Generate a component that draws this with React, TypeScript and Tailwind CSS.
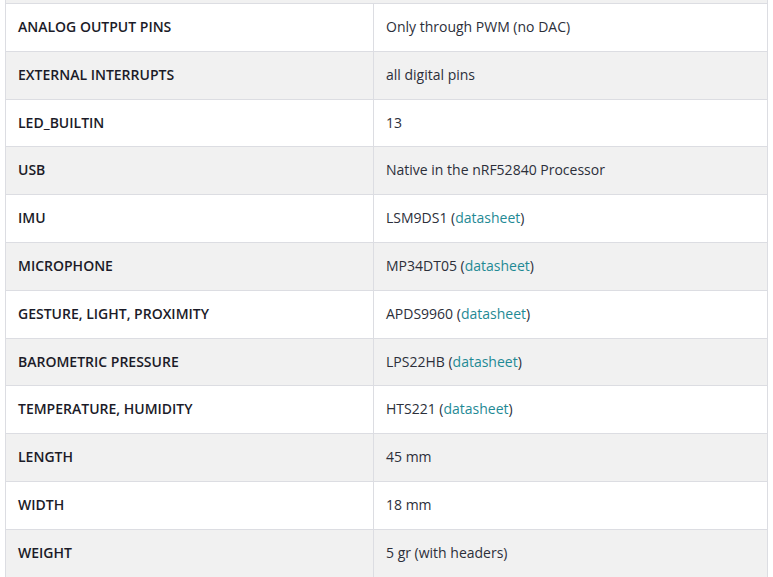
import React from "react";

type Row = { label: string; value: string; link?: boolean };

const rows: Row[] = [
  { label: "ANALOG OUTPUT PINS", value: "Only through PWM (no DAC)" },
  { label: "EXTERNAL INTERRUPTS", value: "all digital pins" },
  { label: "LED_BUILTIN", value: "13" },
  { label: "USB", value: "Native in the nRF52840 Processor" },
  { label: "IMU", value: "LSM9DS1", link: true },
  { label: "MICROPHONE", value: "MP34DT05", link: true },
  { label: "GESTURE, LIGHT, PROXIMITY", value: "APDS9960", link: true },
  { label: "BAROMETRIC PRESSURE", value: "LPS22HB", link: true },
  { label: "TEMPERATURE, HUMIDITY", value: "HTS221", link: true },
  { label: "LENGTH", value: "45 mm" },
  { label: "WIDTH", value: "18 mm" },
  { label: "WEIGHT", value: "5 gr (with headers)" },
];

export default function App() {
  return (
    <div
      className="w-[773px] h-[577px] overflow-hidden bg-white"
      style={{ fontFamily: '"Open Sans", "Liberation Sans", sans-serif' }}
    >
      <div className="ml-[5px] w-[763px]">
        <div className="h-[3px] bg-[#f1f1f1] border-x border-[#dcdde2]" />
        <table className="w-full border-collapse text-[14px] leading-[22.8px]">
          <tbody>
            {rows.map((r, i) => (
              <tr key={r.label} className={i % 2 === 0 ? "bg-white" : "bg-[#f1f1f1]"}>
                <td className="w-[368px] border border-[#dcdde2] px-3 py-3 font-semibold text-[#1b1b28] align-middle">
                  {r.label}
                </td>
                <td className="border border-[#dcdde2] px-3 py-3 text-[#2c2f3a] align-middle">
                  {r.value}
                  {r.link && (
                    <>
                      {" ("}
                      <a className="text-[#1f8a95]">datasheet</a>
                      {")"}
                    </>
                  )}
                </td>
              </tr>
            ))}
          </tbody>
        </table>
      </div>
    </div>
  );
}
